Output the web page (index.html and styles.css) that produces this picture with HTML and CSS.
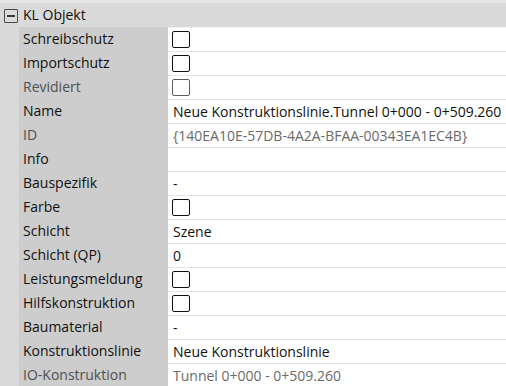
FILE: index.html
```html
<!DOCTYPE html>
<html lang="de">
<head>
<meta charset="utf-8">
<link rel="stylesheet" href="styles.css">
</head>
<body>
<div class="grid">
  <div class="topstrip"></div>
  <div class="header">
    <span class="toggle"><span class="toggle-bar"></span></span>
    <span class="header-text">KL Objekt</span>
  </div>
  <div class="rows">
    <div class="row first"><div class="indent"></div><div class="label">Schreibschutz</div><div class="value"><span class="cb"></span></div></div>
    <div class="row"><div class="indent"></div><div class="label">Importschutz</div><div class="value"><span class="cb"></span></div></div>
    <div class="row"><div class="indent"></div><div class="label dim">Revidiert</div><div class="value"><span class="cb disabled"></span></div></div>
    <div class="row"><div class="indent"></div><div class="label">Name</div><div class="value">Neue Konstruktionslinie.Tunnel 0+000 - 0+509.260</div></div>
    <div class="row"><div class="indent"></div><div class="label dim">ID</div><div class="value grey">{140EA10E-57DB-4A2A-BFAA-00343EA1EC4B}</div></div>
    <div class="row"><div class="indent"></div><div class="label">Info</div><div class="value"></div></div>
    <div class="row"><div class="indent"></div><div class="label">Bauspezifik</div><div class="value">-</div></div>
    <div class="row"><div class="indent"></div><div class="label">Farbe</div><div class="value"><span class="cb"></span></div></div>
    <div class="row"><div class="indent"></div><div class="label">Schicht</div><div class="value">Szene</div></div>
    <div class="row"><div class="indent"></div><div class="label">Schicht (QP)</div><div class="value">0</div></div>
    <div class="row"><div class="indent"></div><div class="label">Leistungsmeldung</div><div class="value"><span class="cb"></span></div></div>
    <div class="row"><div class="indent"></div><div class="label">Hilfskonstruktion</div><div class="value"><span class="cb"></span></div></div>
    <div class="row"><div class="indent"></div><div class="label">Baumaterial</div><div class="value">-</div></div>
    <div class="row"><div class="indent"></div><div class="label">Konstruktionslinie</div><div class="value">Neue Konstruktionslinie</div></div>
    <div class="row"><div class="indent"></div><div class="label dim">IO-Konstruktion</div><div class="value grey">Tunnel 0+000 - 0+509.260</div></div>
  </div>
</div>
</body>
</html>
```
FILE: styles.css
```css
html, body {
  margin: 0;
  padding: 0;
  background: #ffffff;
  overflow: hidden;
}

.grid {
  font-family: "Open Sans", "Noto Sans", sans-serif;
  font-size: 14px;
  color: #111111;
  width: 506px;
}

.topstrip {
  height: 3px;
  background: #e6e6e6;
}

.header {
  height: 24px;
  background: #dadada;
  display: flex;
  align-items: center;
}

.toggle {
  box-sizing: border-box;
  width: 14px;
  height: 14px;
  margin-left: 4px;
  margin-right: 5px;
  margin-top: 2px;
  border: 1.4px solid #4a4a4a;
  border-radius: 1px;
  display: flex;
  align-items: center;
  justify-content: center;
}

.toggle-bar {
  width: 8px;
  height: 2px;
  background: #3a3a3a;
}

.header-text {
  line-height: 24px;
}

.row {
  display: grid;
  grid-template-columns: 19px 149px 1fr;
  height: 24px;
}

.indent {
  background: #d9d9d9;
}

.label {
  background: #cdcdcd;
  padding-left: 4px;
  line-height: 24px;
  white-space: nowrap;
  overflow: hidden;
}

.value {
  box-sizing: border-box;
  border-top: 1px solid #e4e4e4;
  padding-left: 5px;
  line-height: 23px;
  white-space: nowrap;
  overflow: hidden;
  display: flex;
  align-items: center;
}

.row.first .value {
  border-top-color: #f4f4f4;
}

.dim {
  color: #505050;
}

.grey {
  color: #6a6a6a;
}

.cb {
  box-sizing: border-box;
  width: 18px;
  height: 17px;
  border: 1.6px solid #111111;
  border-radius: 2px;
  background: #ffffff;
  margin-left: -1px;
}

.cb.disabled {
  border-color: #5e5e5e;
}
```
